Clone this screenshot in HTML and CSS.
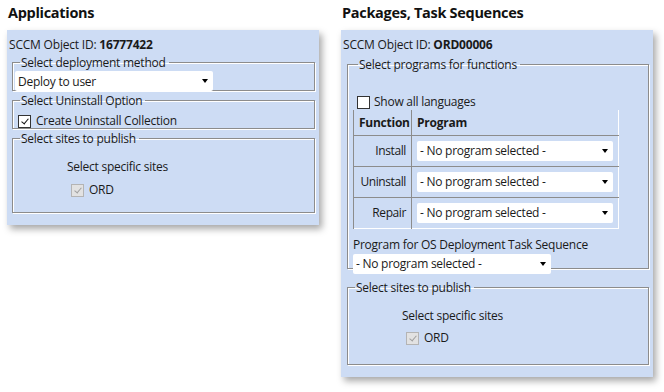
FILE: index.html
```html
<!DOCTYPE html>
<html lang="en">
<head>
  <meta charset="UTF-8">
  <title>Publish options</title>
  <link rel="stylesheet" href="styles.css">
</head>
<body>
  <div class="columns">
    <section class="column column-apps">
      <h1>Applications</h1>
      <div class="panel panel-apps">
        <p class="object-id">SCCM Object ID: <b>16777422</b></p>

        <fieldset class="group group-deploy">
          <legend>Select deployment method</legend>
          <div class="select select-deploy"><span>Deploy to user</span><i class="arrow"></i></div>
        </fieldset>

        <fieldset class="group group-uninstall">
          <legend>Select Uninstall Option</legend>
          <label class="check"><span class="box checked"></span>Create Uninstall Collection</label>
        </fieldset>

        <fieldset class="group group-sites">
          <legend>Select sites to publish</legend>
          <div class="sites">
            <p>Select specific sites</p>
            <label class="check"><span class="box checked disabled"></span>ORD</label>
          </div>
        </fieldset>
      </div>
    </section>

    <section class="column column-pkgs">
      <h1>Packages, Task Sequences</h1>
      <div class="panel panel-pkgs">
        <p class="object-id">SCCM Object ID: <b>ORD00006</b></p>

        <fieldset class="group group-programs">
          <legend>Select programs for functions</legend>
          <label class="check languages"><span class="box"></span>Show all languages</label>
          <table class="functions">
            <thead>
              <tr><th class="fn">Function</th><th>Program</th></tr>
            </thead>
            <tbody>
              <tr>
                <td class="fn">Install</td>
                <td><div class="select"><span>- No program selected -</span><i class="arrow"></i></div></td>
              </tr>
              <tr>
                <td class="fn">Uninstall</td>
                <td><div class="select"><span>- No program selected -</span><i class="arrow"></i></div></td>
              </tr>
              <tr>
                <td class="fn">Repair</td>
                <td><div class="select"><span>- No program selected -</span><i class="arrow"></i></div></td>
              </tr>
            </tbody>
          </table>
          <p class="os-label">Program for OS Deployment Task Sequence</p>
          <div class="select select-os"><span>- No program selected -</span><i class="arrow"></i></div>
        </fieldset>

        <fieldset class="group group-sites group-sites-pkgs">
          <legend>Select sites to publish</legend>
          <div class="sites">
            <p>Select specific sites</p>
            <label class="check"><span class="box checked disabled"></span>ORD</label>
          </div>
        </fieldset>
      </div>
    </section>
  </div>
</body>
</html>
```

FILE: styles.css
```css
:root {
  --panel-bg: #cddcf4;
  --line: #8c8c8c;
  --text: #1a1a1a;
}

* {
  margin: 0;
  padding: 0;
  box-sizing: border-box;
}

body {
  font-family: "Open Sans", "Noto Sans", sans-serif;
  font-size: 12px;
  color: var(--text);
  background: #fff;
  width: 664px;
  height: 392px;
  overflow: hidden;
}

.columns {
  display: flex;
  padding: 3px 0 0 7px;
  gap: 22px;
}

.column-apps,
.column-pkgs {
  width: 312px;
}

h1 {
  font-size: 14.5px;
  font-weight: 700;
  color: #111;
  height: 27px;
  padding-left: 1px;
  letter-spacing: -0.3px;
}

.panel {
  background: var(--panel-bg);
  box-shadow: 3px 4px 7px rgba(0, 0, 0, 0.35);
  padding: 6px 4px 4px 5px;
}

.panel-apps {
  height: 195px;
}

.panel-pkgs {
  height: 347px;
  padding-left: 6px;
}

.object-id {
  line-height: 16px;
  margin: 1px 0 0 -3px;
  letter-spacing: -0.2px;
}

.panel-pkgs .object-id {
  margin-left: -4px;
}

.object-id b {
  font-weight: 700;
}

/* group boxes */
.group {
  border: 1px solid var(--line);
  box-shadow: inset 1px 1px #fff, 1px 1px #fff;
  padding: 0 2px 3px 2px;
  min-width: 0;
}

.group legend {
  padding: 0 3px 0 1px;
  margin-left: 5px;
  line-height: 15px;
  letter-spacing: -0.25px;
}

.group-deploy {
  margin-top: 2px;
  height: 36px;
}

.group-uninstall {
  margin-top: 2px;
  height: 36px;
}

.group-sites {
  margin-top: 2px;
  height: 82px;
}

/* selects */
.select {
  display: flex;
  align-items: center;
  justify-content: space-between;
  background: #fff;
  border-radius: 2px;
  width: 198px;
  height: 20px;
  padding: 0 5px 0 3px;
  letter-spacing: -0.25px;
  white-space: nowrap;
}

.select-deploy {
  margin-top: 1px;
}

.arrow {
  width: 0;
  height: 0;
  border-left: 3.5px solid transparent;
  border-right: 3.5px solid transparent;
  border-top: 4px solid #000;
}

/* checkboxes */
.check {
  display: flex;
  align-items: center;
  gap: 5px;
  line-height: 16px;
  letter-spacing: -0.25px;
}

.box {
  width: 13px;
  height: 13px;
  border: 1px solid #333;
  background: #fff;
  position: relative;
}

.box.checked::after {
  content: "";
  position: absolute;
  left: 3.5px;
  top: 1px;
  width: 3px;
  height: 6px;
  border-right: 1.5px solid #111;
  border-bottom: 1.5px solid #111;
  transform: rotate(40deg);
}

.box.disabled {
  background: #e2e2e2;
  border-color: #b4b4b4;
}

.box.disabled::after {
  border-color: #a0a0a0;
}

.group-uninstall .check {
  margin: 5px 0 0 3px;
}

.sites {
  padding: 13px 0 0 52px;
  line-height: 16px;
  letter-spacing: -0.25px;
}

.sites .check {
  margin: 7px 0 0 4px;
}

/* packages panel */
.group-programs {
  margin-top: 4px;
  height: 212px;
  padding: 0 6px 0 5px;
}

.languages {
  margin: 22px 0 0 4px;
  gap: 4px;
}

.functions {
  border-collapse: collapse;
  table-layout: fixed;
  width: 266px;
  border-right: 1px solid #fff;
  border-bottom: 1px solid #fff;
}

.functions th,
.functions td {
  border: 1px solid var(--line);
  padding: 0 5px;
  letter-spacing: -0.25px;
}

.functions th {
  text-align: left;
  font-weight: 700;
  height: 25px;
}

.functions td {
  height: 31px;
}

.functions .fn {
  width: 58px;
  text-align: right;
}

.functions td.fn {
  padding: 0 5px 0 1px;
  letter-spacing: -0.4px;
}

.functions th.fn {
  text-align: left;
}

.functions .select {
  width: auto;
}

.functions tr:first-child th {
  border-top: none;
}

.functions tr th:last-child,
.functions tr td:last-child {
  border-right: none;
}

.functions tbody tr:last-child td {
  border-bottom: none;
}

.os-label {
  margin-top: 8px;
  line-height: 16px;
  letter-spacing: -0.25px;
}

.select-os {
  margin-top: 1px;
}

.group-sites-pkgs {
  margin-top: 11px;
  height: 85px;
}

.group-sites-pkgs .check {
  margin-top: 6px;
}
```
